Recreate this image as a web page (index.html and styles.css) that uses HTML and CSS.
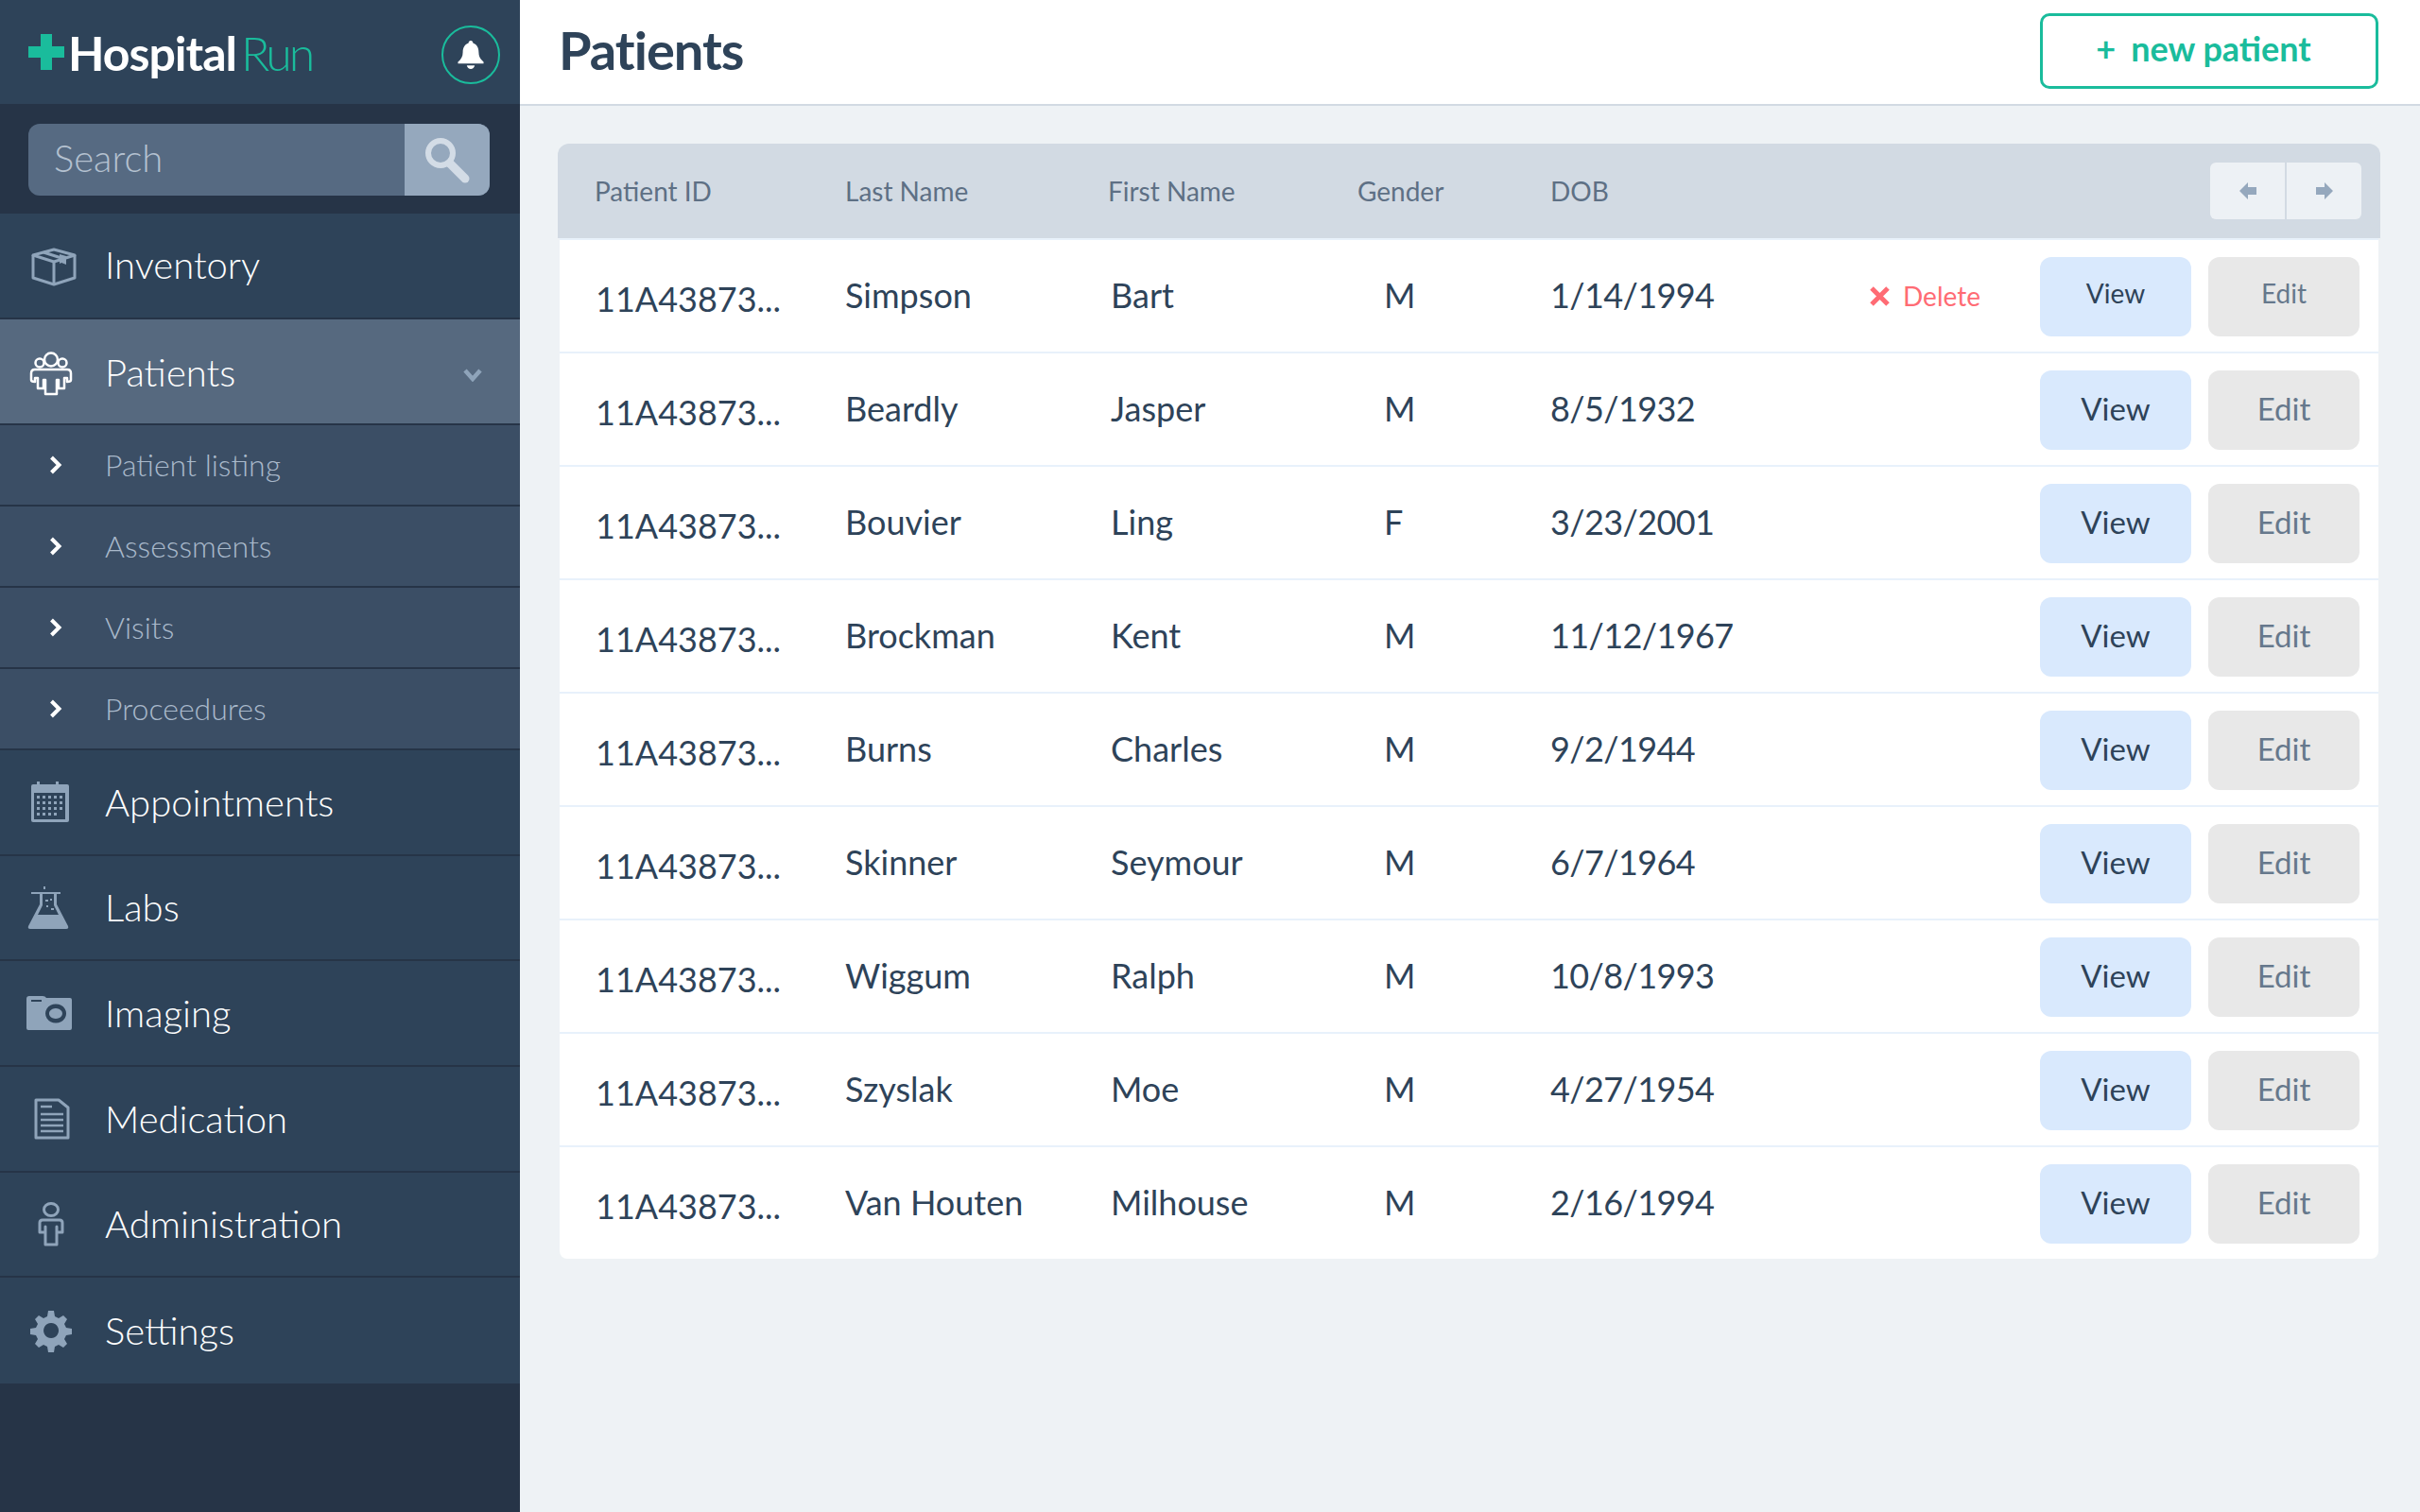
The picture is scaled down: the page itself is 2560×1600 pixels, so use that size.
FILE: index.html
```html
<!DOCTYPE html>
<html lang="en">
  <head>
    <meta charset="UTF-8" />
    <title>HospitalRun - Patients</title>
    <link rel="stylesheet" href="styles.css">
  </head>
  <body>
    <div class="app">
      <aside class="sidebar">
        <div class="brand">
          <svg class="brand-plus" width="38" height="38" viewBox="0 0 38 38"><path d="M13 0H25V13H38V25H25V38H13V25H0V13H13Z" fill="#1abc9c"/></svg>
          <span class="brand-name">Hospital<span class="brand-run">Run</span></span>
          <span class="bell">
            <svg width="28" height="32" viewBox="0 0 30 34"><path d="M15 1c1.500 0 2.500 1 2.500 2.500C22 5 24 9 24 14c0 5 2 8 5.500 11v2H.5v-2C4 22 6 19 6 14c0-5 2-9 6.500-10.500C12.500 2 13.500 1 15 1Z" fill="#fff"/><path d="M10.500 29h9c-.5 2.500-2.300 4-4.500 4s-4-1.500-4.500-4Z" fill="#fff"/></svg>
          </span>
        </div>
        <div class="search-bar">
          <div class="search-box">
            <span class="search-text">Search</span>
            <span class="search-button">
              <svg width="50" height="54" viewBox="0 0 50 54"><circle cx="18" cy="20" r="13" fill="none" stroke="#d3dce6" stroke-width="6"/><path d="M28 31L44 47" stroke="#d3dce6" stroke-width="9" stroke-linecap="round"/></svg>
            </span>
          </div>
        </div>
        <nav>
          <a class="nav-item">
            <svg class="nav-icon" viewBox="0 0 60 60" width="60" height="60"><g fill="none" stroke="#8fa4ba" stroke-width="3" stroke-linejoin="round"><path d="M11 20L33 14L55 20L33 27Z"/><path d="M11 20V44L33 51L55 44V20"/><path d="M33 27V51"/><path d="M22 17L44 24"/></g><path d="M39 19L46 21V30L41 28L39 29Z" fill="#8fa4ba"/></svg>
            Inventory
          </a>
          <a class="nav-item active">
            <svg class="nav-icon" viewBox="0 0 60 60" width="60" height="60"><g fill="none" stroke="#fff" stroke-width="2.500" stroke-linejoin="round"><circle cx="30" cy="16.500" r="7"/><circle cx="18" cy="20" r="4.500"/><circle cx="42" cy="20" r="4.500"/><path d="M13 27H47Q51 27 51 31V38Q51 40 47 40V36H44V47H38V38H36V53H24V38H22V47H16V36H13V40Q9 40 9 38V31Q9 27 13 27Z"/></g></svg>
            Patients
            <svg class="nav-caret" width="20" height="14" viewBox="0 0 20 14"><path d="M2 2L10 11L18 2" fill="none" stroke="#8fa4ba" stroke-width="4.500"/></svg>
          </a>
          <a class="sub-item"><svg class="sub-arrow" width="14" height="20" viewBox="0 0 14 20"><path d="M2.500 2L10.500 10L2.500 18" fill="none" stroke="#fff" stroke-width="4"/></svg>Patient listing</a>
          <a class="sub-item"><svg class="sub-arrow" width="14" height="20" viewBox="0 0 14 20"><path d="M2.500 2L10.500 10L2.500 18" fill="none" stroke="#fff" stroke-width="4"/></svg>Assessments</a>
          <a class="sub-item"><svg class="sub-arrow" width="14" height="20" viewBox="0 0 14 20"><path d="M2.500 2L10.500 10L2.500 18" fill="none" stroke="#fff" stroke-width="4"/></svg>Visits</a>
          <a class="sub-item"><svg class="sub-arrow" width="14" height="20" viewBox="0 0 14 20"><path d="M2.500 2L10.500 10L2.500 18" fill="none" stroke="#fff" stroke-width="4"/></svg>Proceedures</a>
          <a class="nav-item">
            <svg class="nav-icon" viewBox="0 0 60 60" width="60" height="60"><path fill-rule="evenodd" fill="#8fa4ba" d="M11 11h4V8h3v3h17V8h3v3h9q2 0 2 2v36q0 2-2 2H11q-2 0-2-2V13q0-2 2-2ZM12 20V48H45V20Z"/><path fill="#8fa4ba" d="M15 23h3v3h-3zM21 23h3v3h-3zM27 23h3v3h-3zM33 23h3v3h-3zM39 23h3v3h-3zM15 29h3v3h-3zM21 29h3v3h-3zM27 29h3v3h-3zM33 29h3v3h-3zM39 29h3v3h-3zM15 35h3v3h-3zM21 35h3v3h-3zM27 35h3v3h-3zM33 35h3v3h-3zM39 35h3v3h-3zM15 41h3v3h-3zM21 41h3v3h-3zM27 41h3v3h-3zM33 41h3v3h-3z"/></svg>
            Appointments
          </a>
          <a class="nav-item">
            <svg class="nav-icon" viewBox="0 0 60 60" width="60" height="60"><path fill-rule="evenodd" fill="#8fa4ba" d="M9 14h31v2h-4v11l12 23q1 3-2 3H8q-3 0-2-3l12-23V16h-9ZM21 16V28L16 38H38L33 28V16Z"/><path fill="#8fa4ba" d="M22 8h2v3h-2zM24 22h3v2h-3zM29 21h2v2h-2zM25 28h2v2h-2zM30 31h3v2h-3z"/></svg>
            Labs
          </a>
          <a class="nav-item">
            <svg class="nav-icon" viewBox="0 0 60 60" width="60" height="60"><path fill-rule="evenodd" fill="#8fa4ba" d="M7 12h14q3 0 4 2h25q2 0 2 2v30q0 2-2 2H6q-2 0-2-2V15q0-3 3-3ZM9 16v2h11v-2ZM35 20.500a11 10 0 1 0 .1 0ZM35 25a7 5.500 0 1 1-.1 0Z"/></svg>
            Imaging
          </a>
          <a class="nav-item">
            <svg class="nav-icon" viewBox="0 0 60 60" width="60" height="60"><path d="M14 10H38L48 18V50H14Z" fill="none" stroke="#8fa4ba" stroke-width="3" stroke-linejoin="round"/><path d="M19 17h12M19 25h24M19 31h24M19 37h24M19 43h24" stroke="#8fa4ba" stroke-width="2.500"/></svg>
            Medication
          </a>
          <a class="nav-item">
            <svg class="nav-icon" viewBox="0 0 60 60" width="60" height="60"><g fill="none" stroke="#8fa4ba" stroke-width="3"><ellipse cx="30" cy="15" rx="7.500" ry="6.500"/><path d="M21 26H39Q42 26 42 29V39H36V33V52H24V33V39H18V29Q18 26 21 26Z" stroke-linejoin="round"/></g></svg>
            Administration
          </a>
          <a class="nav-item">
            <svg class="nav-icon" viewBox="0 0 60 60" width="60" height="60"><path fill-rule="evenodd" fill="#8fa4ba" d="M27 9h6l1 6 4 2 5-3 4 4-3 5 2 4 6 1v6l-6 1-2 4 3 5-4 4-5-3-4 2-1 6h-6l-1-6-4-2-5 3-4-4 3-5-2-4-6-1v-6l6-1 2-4-3-5 4-4 5 3 4-2ZM30 22a8 8 0 1 0 .1 0Z"/></svg>
            Settings
          </a>
        </nav>
      </aside>
      <main class="main">
        <header class="page-header">
          <h1>Patients</h1>
          <button class="new-patient"><span class="new-plus">+</span>new patient</button>
        </header>
        <div class="content">
          <div class="table">
            <div class="table-head">
              <span>Patient ID</span>
              <span>Last Name</span>
              <span>First Name</span>
              <span>Gender</span>
              <span>DOB</span>
              <div class="pager">
                <button><svg width="18" height="18" viewBox="0 0 18 18"><path d="M0 9L9 0V5H18V13H9V18Z" fill="#95a8bd"/></svg></button>
                <button><svg width="18" height="18" viewBox="0 0 18 18"><path d="M18 9L9 0V5H0V13H9V18Z" fill="#95a8bd"/></svg></button>
              </div>
            </div>
            <div class="row first">
              <span class="id">11A43873...</span><span>Simpson</span><span>Bart</span><span class="gender">M</span><span class="dob">1/14/1994</span>
              <a class="delete"><svg width="21" height="21" viewBox="0 0 21 21"><path d="M2 2L19 19M19 2L2 19" stroke="#ff6b74" stroke-width="5"/></svg>Delete</a>
              <button class="view">View</button><button class="edit">Edit</button>
            </div>
            <div class="row">
              <span class="id">11A43873...</span><span>Beardly</span><span>Jasper</span><span class="gender">M</span><span class="dob">8/5/1932</span><span></span>
              <button class="view">View</button><button class="edit">Edit</button>
            </div>
            <div class="row">
              <span class="id">11A43873...</span><span>Bouvier</span><span>Ling</span><span class="gender">F</span><span class="dob">3/23/2001</span><span></span>
              <button class="view">View</button><button class="edit">Edit</button>
            </div>
            <div class="row">
              <span class="id">11A43873...</span><span>Brockman</span><span>Kent</span><span class="gender">M</span><span class="dob">11/12/1967</span><span></span>
              <button class="view">View</button><button class="edit">Edit</button>
            </div>
            <div class="row">
              <span class="id">11A43873...</span><span>Burns</span><span>Charles</span><span class="gender">M</span><span class="dob">9/2/1944</span><span></span>
              <button class="view">View</button><button class="edit">Edit</button>
            </div>
            <div class="row">
              <span class="id">11A43873...</span><span>Skinner</span><span>Seymour</span><span class="gender">M</span><span class="dob">6/7/1964</span><span></span>
              <button class="view">View</button><button class="edit">Edit</button>
            </div>
            <div class="row">
              <span class="id">11A43873...</span><span>Wiggum</span><span>Ralph</span><span class="gender">M</span><span class="dob">10/8/1993</span><span></span>
              <button class="view">View</button><button class="edit">Edit</button>
            </div>
            <div class="row">
              <span class="id">11A43873...</span><span>Szyslak</span><span>Moe</span><span class="gender">M</span><span class="dob">4/27/1954</span><span></span>
              <button class="view">View</button><button class="edit">Edit</button>
            </div>
            <div class="row">
              <span class="id">11A43873...</span><span>Van Houten</span><span>Milhouse</span><span class="gender">M</span><span class="dob">2/16/1994</span><span></span>
              <button class="view">View</button><button class="edit">Edit</button>
            </div>
          </div>
        </div>
      </main>
    </div>
  </body>
</html>
```

FILE: styles.css
```css
* {
  box-sizing: border-box;
}

body {
  margin: 0;
  font-family: Lato, "Liberation Sans", sans-serif;
  background-color: #eef2f5;
  color: #2e4359;
}

button {
  font-family: inherit;
  border: none;
  padding: 0;
}

.app {
  display: flex;
  height: 1600px;
}

/* sidebar */
.sidebar {
  width: 550px;
  flex-shrink: 0;
  background-color: #263447;
}

.brand {
  height: 110px;
  background-color: #2e4359;
  display: flex;
  align-items: center;
  padding: 0 21px 0 30px;
}

.brand-plus {
  margin-right: 4px;
}

.brand-name {
  font-size: 50px;
  font-weight: 700;
  letter-spacing: -1px;
  color: #fff;
  flex: 1;
  padding-top: 2px;
}

.brand-run {
  font-weight: 300;
  letter-spacing: -3px;
  color: #1abc9c;
  margin-left: 5px;
}

.bell {
  width: 62px;
  height: 62px;
  margin-top: 6px;
  border: 2px solid #1abc9c;
  border-radius: 50%;
  display: flex;
  align-items: center;
  justify-content: center;
}

.search-bar {
  height: 116px;
  padding: 21px 32px 19px 30px;
}

.search-box {
  height: 76px;
  border-radius: 12px;
  background-color: #566a82;
  display: flex;
  align-items: center;
  overflow: hidden;
}

.search-text {
  flex: 1;
  padding-left: 27px;
  padding-bottom: 4px;
  font-size: 40px;
  font-weight: 300;
  color: #b4c1d0;
}

.search-button {
  width: 90px;
  height: 100%;
  background-color: #95a8bd;
  display: flex;
  align-items: center;
  justify-content: center;
}

.nav-item {
  height: 111.67px;
  padding-left: 24px;
  display: flex;
  align-items: center;
  gap: 27px;
  font-size: 40px;
  font-weight: 300;
  color: #fff;
  background-color: #2e4359;
  border-bottom: 2px solid #263447;
}

.nav-item:first-child {
  padding-bottom: 2px;
}

.nav-item:last-child {
  border-bottom: none;
}

.nav-item.active {
  background-color: #56697f;
  height: 112.33px;
  padding-top: 2px;
}

.nav-caret {
  margin-left: auto;
  margin-right: 40px;
  margin-top: 6px;
}

.sub-item {
  height: 86px;
  padding-left: 52px;
  display: flex;
  align-items: center;
  gap: 45px;
  font-size: 32px;
  font-weight: 300;
  color: #a9b9cb;
  background-color: #3b4e65;
  border-bottom: 2px solid #263447;
}

/* main */
.main {
  flex: 1;
}

.page-header {
  height: 112px;
  background-color: #fff;
  border-bottom: 2px solid #d2dae3;
  display: flex;
  align-items: center;
  justify-content: space-between;
  padding: 0 44px 2px 41px;
}

.page-header h1 {
  margin: 0 0 3px;
  font-size: 56px;
  font-weight: 700;
  letter-spacing: -1px;
  color: #2e4359;
}

.new-patient {
  width: 358px;
  height: 80px;
  padding: 0 12px 6px 0;
  border: 3px solid #1abc9c;
  border-radius: 10px;
  background-color: #fff;
  color: #1abc9c;
  font-size: 36px;
  font-weight: 700;
}

.new-plus {
  margin-right: 16px;
  font-weight: 700;
}

.content {
  padding: 40px 42px 0 40px;
}

.table-head {
  height: 100px;
  background-color: #d2dae3;
  border-radius: 12px 12px 0 0;
  font-size: 28px;
  color: #5e7085;
  padding: 0 20px 0 39px;
  display: grid;
  grid-template-columns: 265px 278px 264px 204px 1fr;
  align-items: center;
}

.pager {
  grid-column: 5;
  grid-row: 1;
  justify-self: end;
  width: 160px;
  height: 60px;
  display: flex;
  gap: 2px;
}

.table-head span:nth-child(5) {
  grid-column: 5;
  grid-row: 1;
}

.pager button {
  flex: 1;
  background-color: #edf1f5;
  display: flex;
  align-items: center;
  justify-content: center;
}

.pager button:first-child {
  border-radius: 6px 0 0 6px;
}

.pager button:last-child {
  border-radius: 0 6px 6px 0;
}

.row {
  height: 120px;
  margin: 0 2px;
  padding-left: 38px;
  background-color: #fff;
  border-top: 2px solid #e8f1fb;
  font-size: 36px;
  color: #2e4359;
  display: grid;
  grid-template-columns: 264px 281px 260px 205px 335px 183px 160px 178px;
  align-items: center;
}

.row:last-child {
  border-radius: 0 0 8px 8px;
}

.row > span {
  padding-bottom: 3px;
}

.row > .id {
  padding: 5px 0 0;
}

.row > .gender {
  padding-left: 29px;
}

.dob {
  letter-spacing: -0.6px;
}

.delete {
  display: flex;
  align-items: center;
  gap: 14px;
  padding-left: 3px;
  font-size: 28px;
  color: #ff6b74;
}

.view,
.edit {
  height: 84px;
  width: 160px;
  margin-top: 2px;
  padding-bottom: 4px;
  border-radius: 12px;
  font-size: 33px;
}

.view {
  background-color: #d9e9fd;
  color: #2e4359;
}

.edit {
  background-color: #e8e8e8;
  color: #66788c;
  margin-left: 18px;
}

.first .view,
.first .edit {
  font-size: 28px;
  padding-bottom: 8px;
}
```
